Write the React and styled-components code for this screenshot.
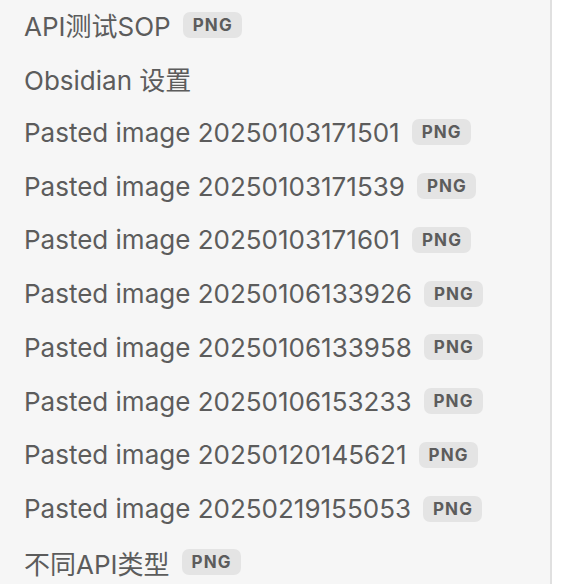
import React from 'react';
import styled, { createGlobalStyle } from 'styled-components';

const GlobalStyle = createGlobalStyle`
  html, body {
    margin: 0;
    padding: 0;
    background: #ffffff;
    overflow: hidden;
  }
`;

const Page = styled.div`
  display: flex;
  height: 584px;
  width: 586px;
  background: #ffffff;
`;

const Sidebar = styled.div`
  width: 552px;
  height: 100%;
  background-color: #f6f6f6;
  border-right: 2px solid #e0e0e0;
  box-sizing: border-box;
  overflow: hidden;
`;

const List = styled.div`
  display: flex;
  flex-direction: column;
  margin-top: -2px;
  padding-left: 24px;
`;

const Row = styled.div`
  display: flex;
  align-items: center;
  gap: 12px;
  height: 53.75px;
  flex-shrink: 0;
`;

const Name = styled.span`
  font-family: Inter, "Noto Sans CJK SC", sans-serif;
  font-size: 26px;
  color: #5c5c5c;
  white-space: nowrap;
`;

const Badge = styled.span`
  display: inline-flex;
  align-items: center;
  height: 26px;
  padding: 0 9px 0 10px;
  border-radius: 7px;
  background-color: #e4e4e4;
  color: #5c5c5c;
  font-family: Inter, sans-serif;
  font-size: 17px;
  font-weight: 700;
  letter-spacing: 1.1px;
`;

const files = [
  { name: 'API测试SOP', ext: 'PNG' },
  { name: 'Obsidian 设置' },
  { name: 'Pasted image 20250103171501', ext: 'PNG' },
  { name: 'Pasted image 20250103171539', ext: 'PNG' },
  { name: 'Pasted image 20250103171601', ext: 'PNG' },
  { name: 'Pasted image 20250106133926', ext: 'PNG' },
  { name: 'Pasted image 20250106133958', ext: 'PNG' },
  { name: 'Pasted image 20250106153233', ext: 'PNG' },
  { name: 'Pasted image 20250120145621', ext: 'PNG' },
  { name: 'Pasted image 20250219155053', ext: 'PNG' },
  { name: '不同API类型', ext: 'PNG' },
];

const App = () => {
  return (
    <>
      <GlobalStyle />
      <Page>
        <Sidebar>
          <List>
            {files.map((f) => (
              <Row key={f.name}>
                <Name>{f.name}</Name>
                {f.ext && <Badge>{f.ext}</Badge>}
              </Row>
            ))}
          </List>
        </Sidebar>
      </Page>
    </>
  );
};

export default App;
